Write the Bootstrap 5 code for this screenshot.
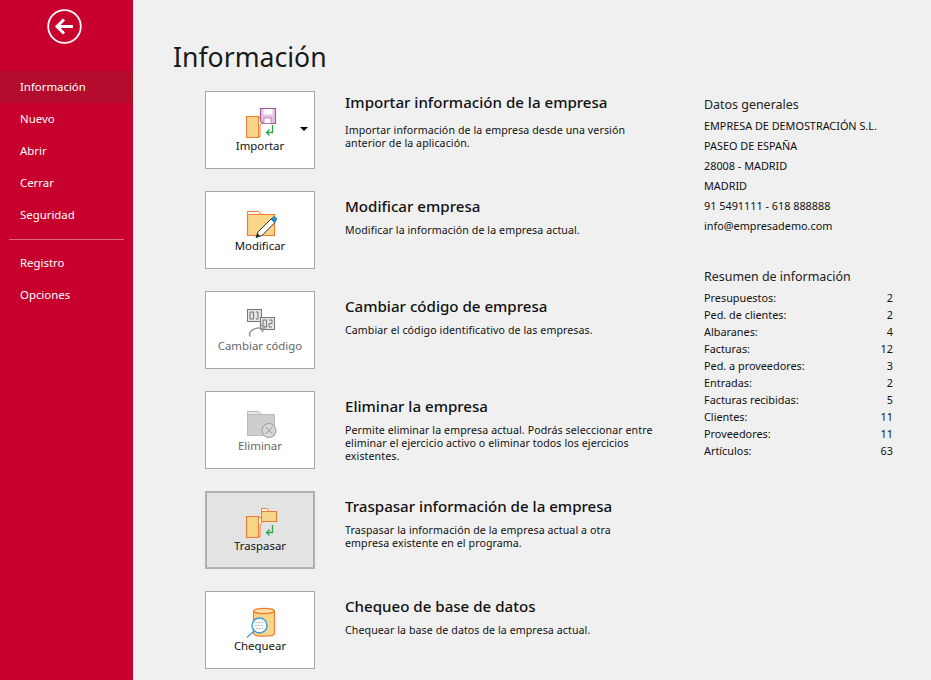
<!DOCTYPE html>
<html lang="es">
<head>
  <meta charset="UTF-8" />
  <meta name="viewport" content="width=device-width, initial-scale=1" />
  <title>Información</title>
  <link href="https://cdn.jsdelivr.net/npm/bootstrap@5.3.2/dist/css/bootstrap.min.css" rel="stylesheet" />
  <style>
    html, body { height: 680px; overflow: hidden; }
    body { background: #f0f0f0; font-family: "Noto Sans", "Liberation Sans", sans-serif; color: #111; }
    .app-shell { height: 680px; }
    .side-bar { width: 133px; background: #c8002d; flex: none; }
    .back-wrap { height: 71px; padding: 9px 0 0 47px; }
    .side-link { display: block; height: 32px; line-height: 32px; padding-left: 20px; color: #fff; font-size: 11.4px; text-decoration: none; }
    .side-link.current { background: #b30c2c; }
    .side-rule { border-top: 1px solid #e0667f; margin: 8px 9px 7px; }
    .page-title { font-size: 26.6px; line-height: 40px; margin: 0; padding: 37px 0 0 40px; height: 91px; font-weight: 400; color: #1a1a1a; }
    .tool-list { padding-left: 72px; gap: 22px; width: 571px; }
    .tool-row { height: 78px; }
    .tool-btn { width: 110px; height: 78px; flex: none; background: #fff; border: 1px solid #a6a6a6; border-radius: 0; font-size: 11.4px; position: relative; padding: 14px 0 0; color: #111; }
    .tool-btn span { display: block; line-height: 16px; }
    .tool-btn.muted-btn { color: #666; }
    .tool-btn.pressed { background: #e3e3e3; border: 2px solid #b0b0b0; padding-top: 13px; }
    .drop-caret { position: absolute; right: 6px; top: 35px; width: 0; height: 0; border-left: 4px solid transparent; border-right: 4px solid transparent; border-top: 4px solid #000; }
    .tool-text { padding-left: 30px; }
    .tool-text h2 { font-size: 15.1px; line-height: 20px; font-weight: 500; margin: 5px 0 8px; color: #111; }
    .tool-text h2.first-head { margin: 1px 0 12px; }
    .tool-text p { font-size: 10.6px; line-height: 13px; margin: 0; color: #111; letter-spacing: .1px; }
    .info-col { padding-top: 5px; width: 189px; }
    .info-head { font-size: 12.45px; line-height: 18px; margin: 0 0 2px; font-weight: 400; color: #222; }
    .info-head.lower-head { margin: 32px 0 3px; }
    .info-line { font-size: 10.85px; line-height: 20px; }
    .count-line { font-size: 10.85px; line-height: 17px; }
  </style>
</head>
<body>
  <div class="app-shell d-flex">
    <nav class="side-bar">
      <div class="back-wrap">
        <svg width="35" height="35" viewBox="0 0 35 35">
          <circle cx="17.5" cy="17.5" r="16.3" fill="none" stroke="#fff" stroke-width="1.8"/>
          <path d="M10 17.5H26M17 10.5L10 17.5L17 24.5" fill="none" stroke="#fff" stroke-width="3"/>
        </svg>
      </div>
      <a class="side-link current" href="#">Información</a>
      <a class="side-link" href="#">Nuevo</a>
      <a class="side-link" href="#">Abrir</a>
      <a class="side-link" href="#">Cerrar</a>
      <a class="side-link" href="#">Seguridad</a>
      <div class="side-rule"></div>
      <a class="side-link" href="#">Registro</a>
      <a class="side-link" href="#">Opciones</a>
    </nav>

    <main class="flex-grow-1">
      <h1 class="page-title">Información</h1>
      <div class="d-flex">
        <div class="tool-list d-flex flex-column">

          <div class="tool-row d-flex">
            <button class="tool-btn d-flex flex-column align-items-center" type="button">
              <svg width="36" height="32" viewBox="0 0 36 32">
                <path d="M16.5 11.5H20.5V16L18 19V30.5H16.5" fill="#fff" stroke="#ee7d31"/>
                <path d="M4.5 10.5H16.5V31.5H4.5Z" fill="#f7d68a" stroke="#ee7d31" stroke-width="1.1"/>
                <path d="M18.5 2.5H33.5V17.5H21L18.5 15Z" fill="#e4c3e2" stroke="#a5559f" stroke-width="1.1"/>
                <rect x="21.5" y="3" width="9" height="5.5" fill="#fff"/>
                <rect x="22" y="12" width="7" height="5.5" fill="#fff" stroke="#a5559f" stroke-width=".6"/>
                <path d="M30.5 19V26.5H24.5M27.5 23.5L24.5 26.5L27.5 29.5" fill="none" stroke="#2aa84f" stroke-width="1.3"/>
              </svg>
              <span>Importar</span>
              <i class="drop-caret"></i>
            </button>
            <div class="tool-text">
              <h2 class="first-head">Importar información de la empresa</h2>
              <p>Importar información de la empresa desde una versión<br>anterior de la aplicación.</p>
            </div>
          </div>

          <div class="tool-row d-flex">
            <button class="tool-btn d-flex flex-column align-items-center" type="button">
              <svg width="36" height="32" viewBox="0 0 36 32">
                <path d="M5.5 5.5H17L19.5 8.5H5.5Z" fill="#fff" stroke="#ee7d31"/>
                <path d="M5.5 8.5H32.5V29.5H5.5Z" fill="#f7d68a" stroke="#ee7d31" stroke-width="1.2"/>
                <path d="M14 31.5L16 26L29 13L33 16.5L20 29.5Z" fill="#fff" stroke="#333"/>
                <path d="M29 13L32 10.5L35 12.5L33 16.5Z" fill="#1b8fc9" stroke="#1b6f9f" stroke-width=".6"/>
                <path d="M14 31.5L15.5 27.5L18 29.8Z" fill="#222"/>
              </svg>
              <span>Modificar</span>
            </button>
            <div class="tool-text">
              <h2>Modificar empresa</h2>
              <p>Modificar la información de la empresa actual.</p>
            </div>
          </div>

          <div class="tool-row d-flex">
            <button class="tool-btn muted-btn d-flex flex-column align-items-center" type="button">
              <svg width="36" height="32" viewBox="0 0 36 32">
                <rect x="5.5" y="3.5" width="14" height="12" fill="#e4e4e4" stroke="#777"/>
                <rect x="18.5" y="11.5" width="14" height="12" fill="#e4e4e4" stroke="#777"/>
                <path d="M8 6H11.5V13H8ZM14 6H16V13H14M21 14H24.5V21H21ZM27 14H30V17.5H27V21H30" fill="none" stroke="#777"/>
                <path d="M8.5 30.5C5 27 11 20.5 21 22.5M17.5 18.5L23 21L20 26" fill="none" stroke="#999" stroke-width="1.5"/>
              </svg>
              <span>Cambiar código</span>
            </button>
            <div class="tool-text">
              <h2>Cambiar código de empresa</h2>
              <p>Cambiar el código identificativo de las empresas.</p>
            </div>
          </div>

          <div class="tool-row d-flex">
            <button class="tool-btn muted-btn d-flex flex-column align-items-center" type="button">
              <svg width="36" height="32" viewBox="0 0 36 32">
                <path d="M5.5 5.5H17L19.5 8.5H5.5Z" fill="#e6e6e6" stroke="#bbb"/>
                <path d="M5.5 8.5H32.5V29.5H5.5Z" fill="#cdcdcd" stroke="#bbb"/>
                <circle cx="27" cy="24.5" r="7" fill="#d8d8d8" stroke="#999"/>
                <path d="M23.5 21L30.5 28M30.5 21L23.5 28" stroke="#999"/>
              </svg>
              <span>Eliminar</span>
            </button>
            <div class="tool-text">
              <h2>Eliminar la empresa</h2>
              <p>Permite eliminar la empresa actual. Podrás seleccionar entre<br>eliminar el ejercicio activo o eliminar todos los ejercicios<br>existentes.</p>
            </div>
          </div>

          <div class="tool-row d-flex">
            <button class="tool-btn pressed d-flex flex-column align-items-center" type="button">
              <svg width="36" height="32" viewBox="0 0 36 32">
                <path d="M16.5 11.5H20.5V16L18 19V30.5H16.5" fill="#fff" stroke="#ee7d31"/>
                <path d="M4.5 10.5H16.5V31.5H4.5Z" fill="#f7d68a" stroke="#ee7d31" stroke-width="1.1"/>
                <path d="M19.5 2.5H25L27 5.5H19.5Z" fill="#fff" stroke="#ee7d31"/>
                <path d="M19.5 5.5H34.5V15.5H19.5Z" fill="#f7d68a" stroke="#ee7d31" stroke-width="1.1"/>
                <path d="M30.5 19V26.5H24.5M27.5 23.5L24.5 26.5L27.5 29.5" fill="none" stroke="#2aa84f" stroke-width="1.3"/>
              </svg>
              <span>Traspasar</span>
            </button>
            <div class="tool-text">
              <h2>Traspasar información de la empresa</h2>
              <p>Traspasar la información de la empresa actual a otra<br>empresa existente en el programa.</p>
            </div>
          </div>

          <div class="tool-row d-flex">
            <button class="tool-btn d-flex flex-column align-items-center" type="button">
              <svg width="36" height="32" viewBox="0 0 36 32">
                <path d="M11.5 5V27.5C11.5 31 32.5 31 32.5 27.5V5Z" fill="#f7d68a" stroke="#ee7d31" stroke-width="1.2"/>
                <ellipse cx="22" cy="5" rx="10.5" ry="2.6" fill="#f9e0a6" stroke="#ee7d31" stroke-width="1.2"/>
                <path d="M5 31.5L12 25" stroke="#3d9bd8" stroke-width="1.3"/>
                <circle cx="17.5" cy="19.5" r="7.5" fill="#fff" stroke="#3d9bd8" stroke-width="1.4"/>
                <path d="M13 16.5H22M13 19.5H22M14 22.5H21" stroke="#bbb" stroke-dasharray="2 1"/>
              </svg>
              <span>Chequear</span>
            </button>
            <div class="tool-text">
              <h2>Chequeo de base de datos</h2>
              <p>Chequear la base de datos de la empresa actual.</p>
            </div>
          </div>
        </div>

        <aside class="info-col">
          <h3 class="info-head">Datos generales</h3>
          <div class="info-line">EMPRESA DE DEMOSTRACIÓN S.L.</div>
          <div class="info-line">PASEO DE ESPAÑA</div>
          <div class="info-line">28008 - MADRID</div>
          <div class="info-line">MADRID</div>
          <div class="info-line">91 5491111 - 618 888888</div>
          <div class="info-line">info@empresademo.com</div>
          <h3 class="info-head lower-head">Resumen de información</h3>
          <div class="count-line d-flex justify-content-between"><span>Presupuestos:</span><span>2</span></div>
          <div class="count-line d-flex justify-content-between"><span>Ped. de clientes:</span><span>2</span></div>
          <div class="count-line d-flex justify-content-between"><span>Albaranes:</span><span>4</span></div>
          <div class="count-line d-flex justify-content-between"><span>Facturas:</span><span>12</span></div>
          <div class="count-line d-flex justify-content-between"><span>Ped. a proveedores:</span><span>3</span></div>
          <div class="count-line d-flex justify-content-between"><span>Entradas:</span><span>2</span></div>
          <div class="count-line d-flex justify-content-between"><span>Facturas recibidas:</span><span>5</span></div>
          <div class="count-line d-flex justify-content-between"><span>Clientes:</span><span>11</span></div>
          <div class="count-line d-flex justify-content-between"><span>Proveedores:</span><span>11</span></div>
          <div class="count-line d-flex justify-content-between"><span>Artículos:</span><span>63</span></div>
        </aside>
      </div>
    </main>
  </div>
  <script src="https://cdn.jsdelivr.net/npm/bootstrap@5.3.2/dist/js/bootstrap.bundle.min.js"></script>
</body>
</html>
